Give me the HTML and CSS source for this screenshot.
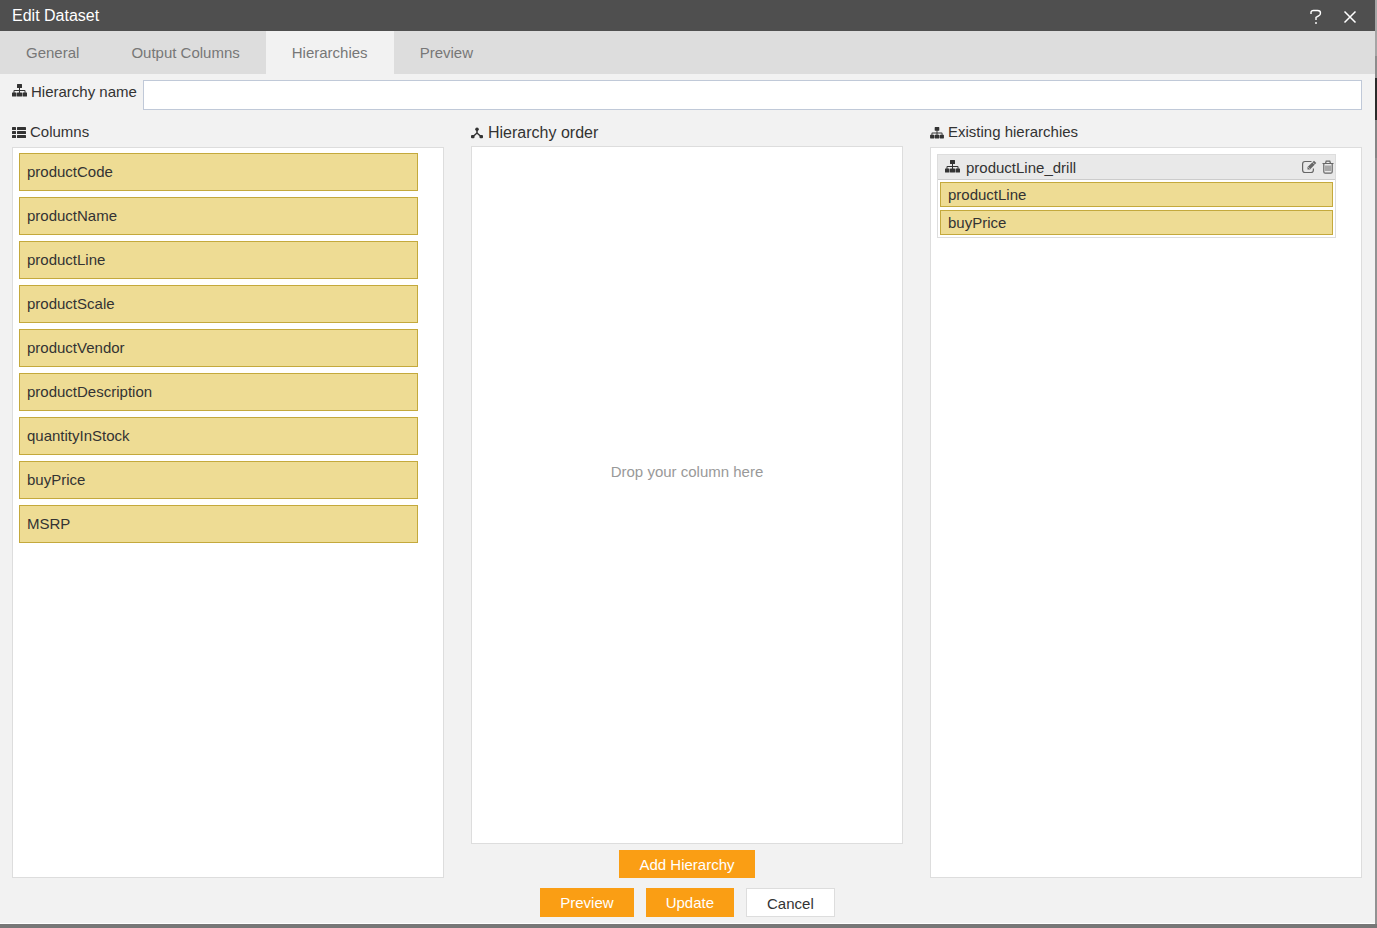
FILE: index.html
```html
<!DOCTYPE html>
<html lang="en">
<head>
<meta charset="utf-8">
<title>Edit Dataset</title>
<link rel="stylesheet" href="styles.css">
</head>
<body>
<svg class="sprite" aria-hidden="true">
  <symbol id="sitemap" viewBox="0 0 15 13">
    <path d="M5 0h5v4H8v2h5q1 0 1 1v1h1v4.500h-5V8h2.500V7H8v1h2v4.500H5V8h2V7H2.500v1H5v4.500H0V8h1V7q0-1 1-1h5V4H5z" fill="none"/>
    <path d="M5.500 0h4q.5 0 .5.500v3q0 .5-.5.500H8v2h4.500q1 0 1 1v1.500h1q.5 0 .5.500v3q0 .5-.5.500h-3.500q-.5 0-.5-.5V9q0-.5.500-.5h1.500V7H8v1.500h1.500q.5 0 .5.500v3q0 .5-.5.500h-4Q5 12.500 5 12V9q0-.5.500-.5H7V7H2.500v1.500H4q.5 0 .5.500v3q0 .5-.5.500H.5Q0 12.500 0 12V9q0-.5.500-.5h1V7q0-1 1-1H7V4H5.500Q5 4 5 3.500v-3Q5 0 5.500 0z" fill="currentColor"/>
  </symbol>
</svg>
<main class="dialog" role="dialog" aria-labelledby="dialog-title">
  <header class="titlebar">
    <h1 class="title" id="dialog-title">Edit Dataset</h1>
    <div class="window-actions">
      <button class="icon-button" type="button" aria-label="Help">
        <svg width="14" height="16" viewBox="0 0 14 16"><path d="M2 5V3.500Q2 1.500 4.500 1.500h4Q11.500 1.500 11.500 4t-2 3L7 8.500V11M7 13v2" fill="none" stroke="currentColor" stroke-width="1.400"/></svg>
      </button>
      <button class="icon-button" type="button" aria-label="Close">
        <svg width="14" height="16" viewBox="0 0 14 16"><path d="M1.500 2.500l11 11M12.500 2.500l-11 11" fill="none" stroke="currentColor" stroke-width="1.500"/></svg>
      </button>
    </div>
  </header>
  <nav class="tabs" role="tablist">
    <button class="tab" type="button" role="tab">General</button>
    <button class="tab" type="button" role="tab">Output Columns</button>
    <button class="tab tab-active" type="button" role="tab" aria-selected="true">Hierarchies</button>
    <button class="tab" type="button" role="tab">Preview</button>
  </nav>
  <div class="name-row">
    <label class="name-label" for="hierarchy-name"><svg class="sitemap"><use href="#sitemap"/></svg>Hierarchy name</label>
    <input class="name-input" id="hierarchy-name" type="text">
  </div>
  <div class="columns">
    <section class="column">
      <h2 class="heading">
        <svg width="14" height="12" viewBox="0 0 14 12" fill="currentColor"><rect x="0" y="1" width="4" height="3" rx=".5"/><rect x="5" y="1" width="9" height="3" rx=".5"/><rect x="0" y="5" width="4" height="3" rx=".5"/><rect x="5" y="5" width="9" height="3" rx=".5"/><rect x="0" y="9" width="4" height="3" rx=".5"/><rect x="5" y="9" width="9" height="3" rx=".5"/></svg>Columns</h2>
      <ul class="panel source-list">
        <li class="chip">productCode</li>
        <li class="chip">productName</li>
        <li class="chip">productLine</li>
        <li class="chip">productScale</li>
        <li class="chip">productVendor</li>
        <li class="chip">productDescription</li>
        <li class="chip">quantityInStock</li>
        <li class="chip">buyPrice</li>
        <li class="chip">MSRP</li>
      </ul>
    </section>
    <section class="column">
      <h2 class="heading heading-order">
        <svg width="12" height="12" viewBox="0 0 12 12"><path d="M6 2v4.500M6 6L1.500 10M6 6l4.500 4" fill="none" stroke="currentColor" stroke-width="1.500"/><g fill="currentColor"><circle cx="6" cy="2.200" r="1.800"/><rect x="0" y="8" width="3.500" height="3.200" rx="1"/><rect x="8.500" y="8" width="3.500" height="3.200" rx="1"/></g></svg>Hierarchy order</h2>
      <div class="panel drop-zone">Drop your column here</div>
      <button class="button button-primary button-add" type="button">Add Hierarchy</button>
    </section>
    <section class="column">
      <h2 class="heading"><svg class="sitemap sitemap-small"><use href="#sitemap"/></svg>Existing hierarchies</h2>
      <div class="panel existing-list">
        <article class="hierarchy">
          <header class="hierarchy-header">
            <svg class="sitemap"><use href="#sitemap"/></svg>
            <h3 class="hierarchy-name">productLine_drill</h3>
            <button class="icon-button small-icon" type="button" aria-label="Edit productLine_drill">
              <svg width="15" height="14" viewBox="0 0 15 14" fill="none" stroke="currentColor"><path d="M9.500 1.500H3Q.6 1.500.6 4v6Q.6 12.500 3 12.500h6q2.400 0 2.400-2.500V8.500" stroke-width="1.200"/><path d="M5.500 9.500V7L12 .800l2.300 2.200L8 9.500z" fill="currentColor" stroke="none"/><path d="M10.500 2.300l2.300 2.300M6.300 7.200l1.600 1.600" stroke="#e9e9e9" stroke-width=".7"/></svg>
            </button>
            <button class="icon-button small-icon" type="button" aria-label="Delete productLine_drill">
              <svg width="12" height="14" viewBox="0 0 12 14" fill="none" stroke="currentColor"><path d="M.5 3.500h11M3.500 3.500L4.200 1.200h3.600l.7 2.300M1.800 3.500v8.200q0 1.500 1.400 1.500h5.600q1.400 0 1.400-1.500V3.500" stroke-width="1.200"/><path d="M4 5.500v5.500M6 5.500v5.500M8 5.500v5.500"/></svg>
            </button>
          </header>
          <ul class="level-list">
            <li class="chip chip-compact">productLine</li>
            <li class="chip chip-compact">buyPrice</li>
          </ul>
        </article>
      </div>
    </section>
  </div>
  <footer class="footer">
    <button class="button button-primary button-preview" type="button">Preview</button>
    <button class="button button-primary" type="button">Update</button>
    <button class="button button-plain" type="button">Cancel</button>
  </footer>
</main>
</body>
</html>
```
FILE: styles.css
```css
* {
  box-sizing: border-box;
}

body {
  margin: 0;
  min-height: 100vh;
  display: flex;
  padding: 0 2px 4px 0;
  background: linear-gradient(#a5a5a5 0 56px, #8c8c8c 56px 78px, #2b2b2b 78px 120px, #858585 120px 158px, #929292 158px 924px, #777 924px);
  color: #333;
  font: 15px/20px "Liberation Sans", Arial, sans-serif;
}

h1,
h2,
h3,
ul {
  margin: 0;
  padding: 0;
  font: inherit;
  list-style: none;
}

button,
input {
  margin: 0;
  border: 0;
  border-radius: 0;
  padding: 0;
  background: none;
  color: inherit;
  font: inherit;
}

svg {
  display: block;
  flex: none;
}

.sprite {
  position: absolute;
  width: 0;
  height: 0;
}

.dialog {
  flex: 1;
  display: flex;
  flex-direction: column;
  border-bottom: 1px solid #fff;
  background: #f2f2f2;
}

.titlebar {
  display: flex;
  justify-content: space-between;
  height: 31px;
  padding: 0 18px 0 12px;
  background: #4f4f4f;
  color: #fff;
}

.title {
  font-size: 16px;
  line-height: 31px;
}

.window-actions {
  display: flex;
  gap: 20px;
  padding-top: 9px;
}

.icon-button {
  display: flex;
  align-self: flex-start;
}

.tabs {
  display: flex;
  background: #ddd;
}

.tab {
  height: 43px;
  padding: 0 26px;
  color: #777;
}

.tab-active {
  background: #f2f2f2;
}

.name-row {
  display: flex;
  gap: 6px;
  padding: 6px 13px 0 12px;
}

.name-label {
  display: flex;
  gap: 4px;
  padding-top: 2px;
}

.sitemap {
  width: 15px;
  height: 13px;
  margin-top: 2px;
}

.sitemap-small {
  width: 14px;
  height: 12px;
}

.name-input {
  flex: 1;
  min-width: 0;
  height: 30px;
  padding: 0 8px;
  border: 1px solid #c0c9d8;
  background: #fff;
}

.columns {
  flex: 1;
  display: grid;
  grid-template-columns: repeat(3, 1fr);
  gap: 27px;
  padding: 12px 13px 0 12px;
}

.column {
  display: flex;
  flex-direction: column;
}

.heading {
  display: flex;
  align-items: center;
  gap: 4px;
  height: 25px;
  padding-bottom: 5px;
}

.heading-order {
  gap: 5px;
  height: 24px;
  padding-bottom: 3px;
  font-size: 16px;
}

.panel {
  flex: 1;
  border: 1px solid #ddd;
  background: #fff;
}

.source-list {
  display: flex;
  flex-direction: column;
  gap: 6px;
  padding: 5px 25px 5px 6px;
}

.chip {
  height: 38px;
  padding-left: 7px;
  border: 1px solid #c4a93c;
  background: #eedc94;
  line-height: 36px;
}

.chip-compact {
  height: 25px;
  line-height: 24px;
}

.drop-zone {
  display: grid;
  place-items: center;
  padding-bottom: 46px;
  color: #999;
}

.existing-list {
  padding: 6px 25px 6px 6px;
}

.hierarchy {
  border: 1px solid #ddd;
}

.hierarchy-header {
  display: flex;
  align-items: flex-start;
  height: 25px;
  padding: 3px 1px 0 7px;
  border-bottom: 1px solid #ccc;
  background: #e9e9e9;
}

.hierarchy-name {
  flex: 1;
  padding-left: 6px;
}

.small-icon {
  margin: 2px 0 0 5px;
  color: #666;
}

.level-list {
  display: grid;
  gap: 3px;
  padding: 2px;
}

.button {
  height: 29px;
  padding: 0 20px;
  line-height: 29px;
}

.button-primary {
  background: #fa9e14;
  color: #fff;
}

.button-add {
  align-self: center;
  height: 28px;
  margin-top: 6px;
}

.button-plain {
  border: 1px solid #ddd;
  background: #fff;
}

.footer {
  display: flex;
  justify-content: center;
  gap: 12px;
  padding: 10px 0 6px;
}
```
